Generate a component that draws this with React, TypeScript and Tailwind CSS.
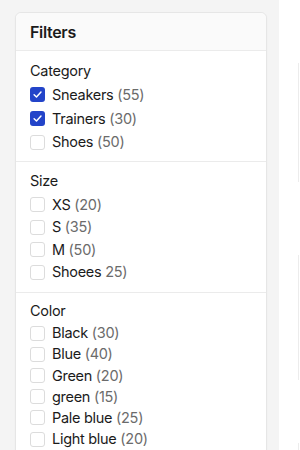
import React from "react";

type Item = { label: string; count: string; checked?: boolean };

const sections: { title: string; rowH: number; pt: number; pb: number; items: Item[] }[] = [
  {
    title: "Category",
    rowH: 23.75,
    pt: 8,
    pb: 7,
    items: [
      { label: "Sneakers", count: "(55)", checked: true },
      { label: "Trainers", count: "(30)", checked: true },
      { label: "Shoes", count: "(50)" },
    ],
  },
  {
    title: "Size",
    rowH: 22.6,
    pt: 7,
    pb: 8,
    items: [
      { label: "XS", count: "(20)" },
      { label: "S", count: "(35)" },
      { label: "M", count: "(50)" },
      { label: "Shoees", count: "25)" },
    ],
  },
  {
    title: "Color",
    rowH: 21.2,
    pt: 6,
    pb: 8,
    items: [
      { label: "Black", count: "(30)" },
      { label: "Blue", count: "(40)" },
      { label: "Green", count: "(20)" },
      { label: "green", count: "(15)" },
      { label: "Pale blue", count: "(25)" },
      { label: "Light blue", count: "(20)" },
    ],
  },
];

function Box({ checked }: { checked?: boolean }) {
  if (checked) {
    return (
      <span className="flex h-[15px] w-[15px] shrink-0 items-center justify-center rounded-[3px] bg-[#2344c9]">
        <svg width="11" height="11" viewBox="0 0 12 12" fill="none">
          <path d="M2.3 6.3 L4.9 8.8 L9.8 3.4" stroke="white" strokeWidth="1.6" strokeLinecap="round" strokeLinejoin="round" />
        </svg>
      </span>
    );
  }
  return <span className="h-[15px] w-[15px] shrink-0 rounded-[3px] border border-[#dcdcdc] bg-white" />;
}

export default function App() {
  return (
    <div
      className="flex h-[450px] w-[300px] overflow-hidden bg-[#f4f4f4] text-[#1b1b1b]"
      style={{ fontFamily: "Inter, 'Noto Sans', sans-serif" }}
    >
      <div className="w-[279px] shrink-0 pl-[15px] pr-[12px] pt-[12px]">
        <div className="h-[500px] rounded-[6px] border border-[#e6e6e6] bg-white shadow-[0_1px_2px_rgba(0,0,0,0.04)]">
          <div className="flex h-[38px] items-center rounded-t-[6px] border-b border-[#ebebeb] bg-[#fafafa] px-[14px]">
            <span className="text-[16px] font-semibold tracking-[-0.02em]">Filters</span>
          </div>
          {sections.map((s, i) => (
            <div
              key={s.title}
              className={`px-[14px] ${i < sections.length - 1 ? "border-b border-[#ebebeb]" : ""}`}
              style={{ paddingTop: s.pt, paddingBottom: s.pb }}
            >
              <div className="text-[14.5px] leading-[24px] tracking-[-0.02em]">{s.title}</div>
              {s.items.map((it) => (
                <div key={it.label} className="flex items-center gap-[7px]" style={{ height: s.rowH }}>
                  <Box checked={it.checked} />
                  <span className="text-[14.5px] leading-[20px] tracking-[-0.02em]">
                    {it.label} <span className="text-[#6b6b6b]">{it.count}</span>
                  </span>
                </div>
              ))}
            </div>
          ))}
        </div>
      </div>
      <div className="relative flex-1 bg-white">
        <div className="absolute left-[19px] top-[63px] h-[119px] w-px bg-[#ececec]" />
        <div className="absolute left-[19px] top-[255px] h-[125px] w-px bg-[#ececec]" />
        <div className="absolute left-[19px] top-[443px] h-[7px] w-px bg-[#ececec]" />
      </div>
    </div>
  );
}
